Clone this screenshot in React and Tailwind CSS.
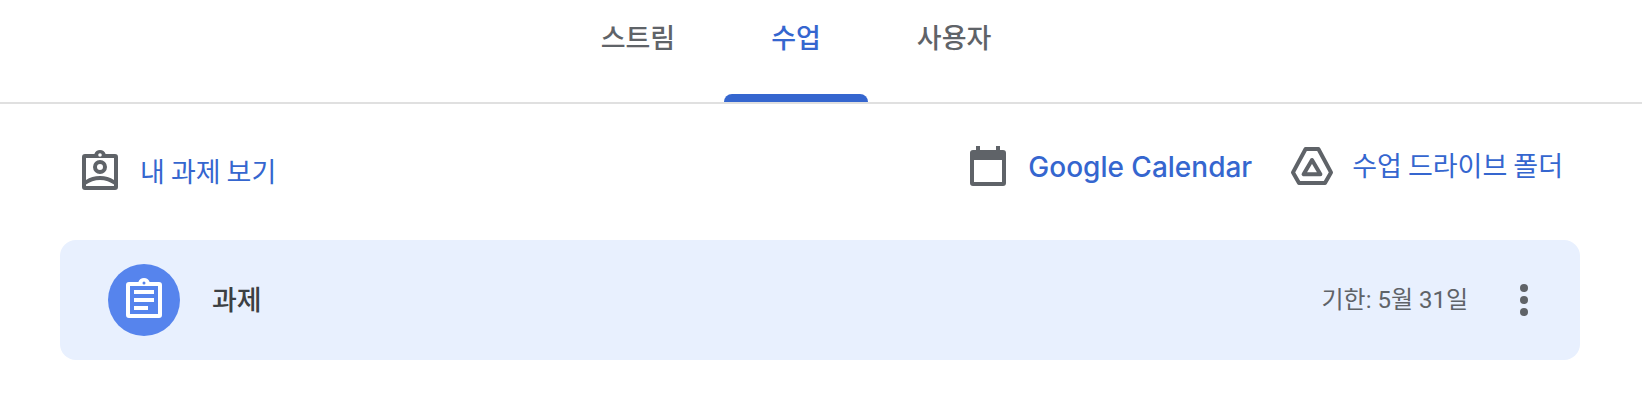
import React from "react";
import clsx from "clsx";

const tabs = [
  { id: "stream", label: "스트림" },
  { id: "classwork", label: "수업" },
  { id: "people", label: "사용자" },
];

const StudentWorkIcon = () => (
  <svg viewBox="0 0 24 24" className="size-12 shrink-0 text-[#5f6368]" fill="currentColor" fillRule="evenodd" aria-hidden="true">
    <path d="M19.500 3h-4.680a3 3 0 0 0-5.640 0H4.500A1.500 1.500 0 0 0 3 4.500v15A1.500 1.500 0 0 0 4.500 21h15a1.500 1.500 0 0 0 1.500-1.500v-15A1.500 1.500 0 0 0 19.500 3zM12 2.600a.9.9 0 1 1 0 1.800a.9.9 0 0 1 0-1.800zM5 5h14v11.050C17.100 14.750 14.700 14 12 14s-5.100.750-7 2.050zM5 19v-.7C6.900 16.850 9.300 16 12 16s5.100.850 7 2.300v.7z" />
    <path d="M12 6a3.500 3.500 0 1 0 0 7a3.500 3.500 0 0 0 0-7zm0 2a1.500 1.500 0 1 1 0 3a1.500 1.500 0 0 1 0-3z" />
  </svg>
);

const CalendarIcon = () => (
  <svg viewBox="0 0 24 24" className="size-12 shrink-0 text-[#5f6368]" fill="currentColor" fillRule="evenodd" aria-hidden="true">
    <path d="M19.500 3H18V1h-2v2H8V1H6v2H4.500A1.500 1.500 0 0 0 3 4.500v15A1.500 1.500 0 0 0 4.500 21h15a1.500 1.500 0 0 0 1.500-1.500v-15A1.500 1.500 0 0 0 19.500 3zM5 8h14v11H5z" />
  </svg>
);

const DriveIcon = () => (
  <svg viewBox="0 0 24 24" className="size-12 shrink-0 text-[#5f6368]" fill="none" stroke="currentColor" strokeWidth="2" strokeLinejoin="round" aria-hidden="true">
    <path d="M8.800 2.500h6.400L21.500 14.200l-3 5.300h-13l-3-5.300z" />
    <path d="M12 8l-4.200 7.100h8.400z" />
  </svg>
);

const AssignmentIcon = () => (
  <svg viewBox="0 0 24 24" className="size-12" fill="currentColor" fillRule="evenodd" aria-hidden="true">
    <path d="M19.500 3h-4.680a3 3 0 0 0-5.640 0H4.500A1.500 1.500 0 0 0 3 4.500v15A1.500 1.500 0 0 0 4.500 21h15a1.500 1.500 0 0 0 1.500-1.500v-15A1.500 1.500 0 0 0 19.500 3zM12 2.750a.75.75 0 1 1 0 1.500a.75.75 0 0 1 0-1.500zM5 5h14v14H5z" />
    <path d="M7 7h10v2H7zM7 11h10v2H7zM7 15h7v2H7z" />
  </svg>
);

const MoreIcon = () => (
  <svg viewBox="0 0 24 24" className="size-12" fill="currentColor" aria-hidden="true">
    <circle cx="12" cy="6" r="2" />
    <circle cx="12" cy="12" r="2" />
    <circle cx="12" cy="18" r="2" />
  </svg>
);

const App = () => {
  const activeTab = "classwork";

  return (
    <div className="bg-white font-['Noto_Sans_CJK_KR',sans-serif] text-[27px] leading-9">

      {/* ===== TABS ===== */}
      <nav className="flex justify-center border-b-2 border-[#e0e0e0] pr-[50px]">
        {tabs.map((tab) => (
          <a
            key={tab.id}
            href={`#${tab.id}`}
            aria-current={tab.id === activeTab ? "page" : undefined}
            className={clsx("flex flex-col gap-[39px] pt-[19px] font-medium", tab.id === activeTab ? "text-[#3566cf]" : "text-[#5f6368]")}
          >
            <span className="px-12">{tab.label}</span>
            <span className={clsx("mx-px h-2 rounded-t-lg", tab.id === activeTab && "bg-[#3566cf]")} />
          </a>
        ))}
      </nav>

      <main className="pt-10 pr-[62px] pl-[60px]">

        {/* ===== LINKS ===== */}
        <div className="flex items-start justify-between pr-[17px] pl-4 text-[#3566cf]">
          <a href="#my-work" className="mt-1 flex items-center gap-4">
            <StudentWorkIcon />
            <span className="pb-0.5">내 과제 보기</span>
          </a>
          <div className="flex gap-9">
            <a href="#calendar" className="flex items-center gap-4">
              <CalendarIcon />
              <span className="pb-0.5 font-['Inter',sans-serif] text-[28px] font-medium">Google Calendar</span>
            </a>
            <a href="#drive" className="flex items-center gap-4">
              <DriveIcon />
              <span className="pb-1.5">수업 드라이브 폴더</span>
            </a>
          </div>
        </div>

        {/* ===== ASSIGNMENT ===== */}
        <div className="mt-11 flex h-[120px] items-center rounded-2xl bg-[#e8f0fe] pr-8 pl-12">
          <div className="flex size-[72px] items-center justify-center rounded-full bg-[#5684ed] text-white">
            <AssignmentIcon />
          </div>
          <h2 className="ml-8 pb-0.5 font-medium text-[#3c4043]">과제</h2>
          <p className="ml-auto font-['Roboto','Noto_Sans_CJK_KR',sans-serif] text-2xl text-[#5f6368]">기한: 5월 31일</p>
          <button type="button" aria-label="옵션 더보기" className="ml-8 text-[#5f6368]">
            <MoreIcon />
          </button>
        </div>
      </main>
    </div>
  );
};

export default App;
